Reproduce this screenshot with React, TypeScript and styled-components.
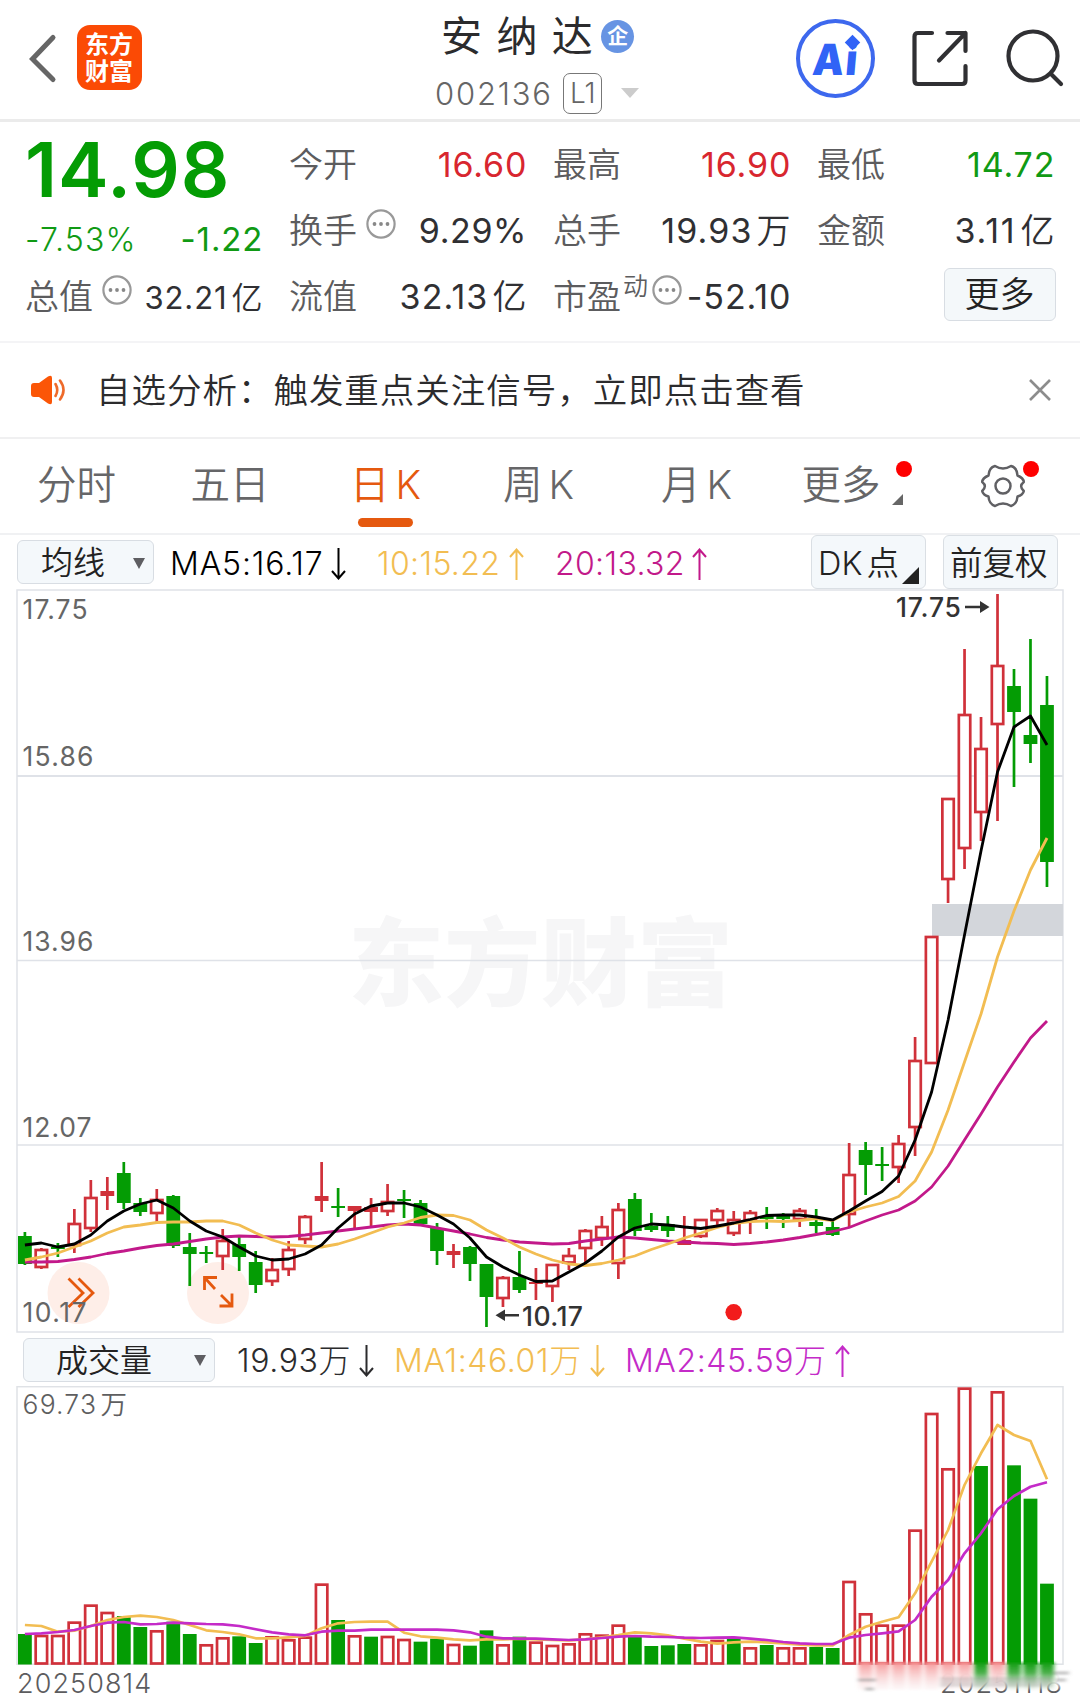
import React from 'react';
import styled, { createGlobalStyle } from 'styled-components';

const RED = '#d0313a';
const GREEN = '#049c04';
const UP_TEXT = '#d8262f';
const DOWN_TEXT = '#109a14';
const AMBER = '#f2bd52';
const MAGENTA = '#c2198a';
const VIOLET = '#c42bc8';
const ORANGE = '#e5590f';

const Global = createGlobalStyle`
  * { box-sizing: border-box; }
  body {
    margin: 0;
    background: #fff;
    font-family: Inter, "Noto Sans CJK SC", sans-serif;
    color: #2b2b2d;
    -webkit-font-smoothing: antialiased;
  }
`;

const Screen = styled.main`
  width: 1080px;
  height: 1702px;
  overflow: hidden;
  display: flex;
  flex-direction: column;
  background: #fff;
  line-height: 1;
  white-space: nowrap;
`;

/* ---------- header ---------- */
const Header = styled.header`
  height: 122px;
  flex: none;
  display: grid;
  grid-template-columns: 435px 1fr 284px;
  border-bottom: 3px solid #ebebeb;
`;
const HeadLeft = styled.div`
  display: flex;
  align-items: flex-start;
  padding: 25px 0 0 26px;
  gap: 18px;
`;
const Logo = styled.div`
  width: 65px;
  height: 65px;
  border-radius: 13px;
  background: #fb4a05;
  color: #fff;
  font-size: 24px;
  font-weight: 700;
  line-height: 27px;
  padding: 6px 0 0 8px;
  white-space: normal;
`;
const HeadCenter = styled.div`
  display: flex;
  flex-direction: column;
`;
const TitleRow = styled.div`
  display: flex;
  align-items: center;
  height: 72px;
  padding-left: 6px;
`;
const Title = styled.h1`
  margin: 0;
  font-size: 41px;
  font-weight: 400;
  letter-spacing: 14.4px;
  line-height: 72px;
`;
const Enterprise = styled.span`
  width: 33px;
  height: 33px;
  border-radius: 50%;
  background: #6794e3;
  color: #fff;
  font-size: 21px;
  font-weight: 700;
  line-height: 31px;
  text-align: center;
  margin-left: -6px;
`;
const CodeRow = styled.div`
  display: flex;
  align-items: center;
  height: 42px;
  color: #666;
`;
const Code = styled.span`
  font-size: 31px;
  font-weight: 300;
  letter-spacing: 1.8px;
`;
const Level = styled.span`
  width: 39px;
  height: 41px;
  margin-left: 10.5px;
  border: 1.5px solid #777;
  border-radius: 7px;
  font-size: 28px;
  font-weight: 300;
  line-height: 38px;
  text-align: center;
`;
const HeadRight = styled.div`
  display: flex;
  align-items: flex-start;
  padding-top: 18px;
`;
const AiBadge = styled.div`
  position: relative;
  width: 79px;
  height: 79px;
  margin-top: 1px;
  border: 4px solid #3d68ee;
  border-radius: 50%;
  color: #3163f6;
  font-size: 43px;
  font-weight: 900;
  letter-spacing: 1.5px;
  line-height: 72px;
  text-align: center;
  &::after {
    content: '';
    position: absolute;
    left: 47px;
    top: 14px;
    width: 11px;
    height: 11px;
    background: #3163f6;
    transform: rotate(45deg);
  }
`;
const AiText = styled.span`
  display: inline-block;
  transform: skewX(-5deg) scaleX(0.92);
`;

/* ---------- quote ---------- */
const Quote = styled.section`
  height: 221px;
  flex: none;
  padding: 10px 24px 0 25px;
  display: grid;
  grid-template-columns: repeat(4, 237.5px);
  grid-template-rows: repeat(3, 66px);
  column-gap: 26.5px;
  border-bottom: 2px solid #f4f4f6;
`;
const Cell = styled.div<{ $drop?: number }>`
  display: flex;
  align-items: center;
  justify-content: space-between;
  padding-top: ${p => p.$drop ?? 0}px;
`;
const BigPrice = styled.strong`
  font-size: 76px;
  font-weight: 600;
  letter-spacing: 0.9px;
  color: ${GREEN};
`;
const Label = styled.span`
  display: flex;
  align-items: center;
  font-size: 34px;
  font-weight: 350;
  color: #5c5c5e;
`;
const Sup = styled.span`
  font-size: 25px;
  margin: -22px -5px 0 2px;
`;
const Value = styled.span<{ $tone?: string; $size?: number; $ls?: number; $thin?: boolean }>`
  font-size: ${p => p.$size ?? 34}px;
  font-weight: ${p => (p.$thin ? 300 : 400)};
  letter-spacing: ${p => p.$ls ?? 0.9}px;
  margin-right: -${p => p.$ls ?? 0.9}px;
  color: ${p => p.$tone ?? '#303033'};
`;
const Unit = styled.span`
  margin-left: 4px;
  font-weight: 350;
`;
const MoreButton = styled.button`
  width: 112px;
  height: 53px;
  margin: -6px -1px 0 auto;
  border: 1.5px solid #d8dde3;
  border-radius: 6px;
  background: #f4f8fa;
  font: 350 35px/1 Inter, "Noto Sans CJK SC", sans-serif;
  color: #222;
  padding: 1px 0 0;
`;

/* ---------- notice ---------- */
const Notice = styled.section`
  height: 96px;
  flex: none;
  display: flex;
  align-items: center;
  padding: 0 29px 0 30px;
  border-bottom: 2px solid #f0f0f1;
`;
const NoticeText = styled.p`
  margin: 2px auto 0 29px;
  font-size: 34.5px;
  font-weight: 350;
  letter-spacing: 0.98px;
`;

/* ---------- tabs ---------- */
const Tabs = styled.nav`
  height: 96px;
  flex: none;
  display: grid;
  grid-template-columns: 153px 154px 157px 149px 167px 122px 1fr;
  border-bottom: 2px solid #f0f1f3;
`;
const Tab = styled.div<{ $active?: boolean }>`
  position: relative;
  display: flex;
  align-items: center;
  justify-content: center;
  gap: 6px;
  font-size: 39.5px;
  font-weight: 350;
  color: ${p => (p.$active ? ORANGE : '#666668')};
  ${p =>
    p.$active &&
    `&::after {
      content: '';
      position: absolute;
      left: 51px;
      bottom: 6px;
      width: 55px;
      height: 9px;
      border-radius: 5px;
      background: ${ORANGE};
    }`}
`;
const Dot = styled.i<{ $right: number }>`
  position: absolute;
  top: 22px;
  right: ${p => p.$right}px;
  width: 16px;
  height: 16px;
  border-radius: 50%;
  background: #fe0000;
`;
const Corner = styled.i<{ $size: number; $tone: string; $right: number; $bottom: number }>`
  position: absolute;
  right: ${p => p.$right}px;
  bottom: ${p => p.$bottom}px;
  width: ${p => p.$size}px;
  height: ${p => p.$size}px;
  background: ${p => p.$tone};
  clip-path: polygon(100% 0, 100% 100%, 0 100%);
`;
const GearTab = styled(Tab)`
  justify-content: flex-start;
  padding-left: 78px;
  padding-bottom: 1px;
`;

/* ---------- indicator bars ---------- */
const Bar = styled.section<{ $h: number; $pad: number }>`
  height: ${p => p.$h}px;
  flex: none;
  display: flex;
  align-items: center;
  padding: 0 22px 0 ${p => p.$pad}px;
`;
const Select = styled.div<{ $w: number; $pl: number }>`
  width: ${p => p.$w}px;
  height: 44px;
  display: flex;
  align-items: center;
  justify-content: space-between;
  padding: 2px 8px 0 ${p => p.$pl}px;
  border: 1.5px solid #d8dde3;
  border-radius: 6px;
  background: #f4f8fb;
  font-size: 32px;
  font-weight: 350;
  color: #222;
`;
const Reading = styled.span<{ $tone: string; $w: number; $ml: number; $ls?: number }>`
  display: flex;
  align-items: center;
  justify-content: space-between;
  width: ${p => p.$w}px;
  margin-left: ${p => p.$ml}px;
  padding-top: 3px;
  font-size: 32px;
  font-weight: 320;
  letter-spacing: ${p => p.$ls ?? 0.35}px;
  color: ${p => p.$tone};
`;
const Chip = styled.div<{ $ml?: string }>`
  position: relative;
  width: 115px;
  height: 54px;
  margin-left: ${p => p.$ml ?? '17px'};
  padding: 1px 0 0 6px;
  border: 1.5px solid #dadfe4;
  border-radius: 6px;
  background: #f4f8fb;
  font-size: 32.5px;
  font-weight: 350;
  line-height: 53px;
  color: #222;
`;
const Plot = styled.div`
  flex: none;
  display: flex;
  svg { display: block; }
`;
const Footer = styled.footer`
  position: relative;
  flex: 1;
  display: flex;
  justify-content: space-between;
  padding: 5px 17px 0 17px;
  font-size: 27px;
  font-weight: 350;
  line-height: 28px;
  letter-spacing: 1.1px;
  color: #5c5c5e;
`;
const Smear = styled.svg`
  position: absolute;
  left: 850px;
  top: -6px;
`;

/* ---------- small drawings ---------- */
const Info = ({ up = 14 }: { up?: number }) => (
  <svg width="30" height="30" viewBox="0 0 30 30" style={{ marginLeft: 9, marginTop: -up }}>
    <circle cx="15" cy="15" r="13.6" fill="none" stroke="#999" strokeWidth="2.2" />
    {[8.5, 15, 21.5].map(x => <circle key={x} cx={x} cy="15" r="1.9" fill="#888" />)}
  </svg>
);
const Caret = ({ w = 12, tone = '#5e5e62' }: { w?: number; tone?: string }) => (
  <svg width={w} height="11" viewBox="0 0 12 11" preserveAspectRatio="none">
    <path d="M0 0H12L6 11Z" fill={tone} />
  </svg>
);
const Arrow = ({ up }: { up?: boolean }) => (
  <svg width="15" height="32" viewBox="0 0 15 32" fill="none" stroke="currentColor" strokeWidth="2"
    transform={up ? undefined : 'rotate(180)'}>
    <path d="M7.5 32V1.5M1 9L7.5 1.5L14 9" />
  </svg>
);

/* ---------- data ---------- */
type Candle = [up: 0 | 1, high: number, top: number, bottom: number, low: number];
const candles: Candle[] = [
  [0, 1232, 1236, 1264, 1265], [1, 1248, 1250, 1267, 1269], [0, 1243, 1247, 1249, 1257],
  [1, 1209, 1224, 1245, 1253], [1, 1180, 1198, 1228, 1232], [1, 1177, 1191, 1196, 1210],
  [0, 1162, 1173, 1203, 1209], [0, 1198, 1203, 1212, 1216], [1, 1189, 1200, 1213, 1222],
  [0, 1195, 1196, 1246, 1248], [0, 1233, 1247, 1254, 1286], [0, 1246, 1252, 1254, 1263],
  [1, 1229, 1241, 1256, 1270], [0, 1237, 1244, 1257, 1271], [0, 1251, 1262, 1285, 1293],
  [1, 1258, 1270, 1281, 1286], [1, 1241, 1250, 1269, 1276], [1, 1215, 1217, 1239, 1244],
  [1, 1162, 1196, 1201, 1212], [0, 1188, 1206, 1208, 1217], [1, 1206, 1206, 1211, 1230],
  [1, 1198, 1207, 1212, 1227], [1, 1184, 1202, 1211, 1216], [0, 1190, 1199, 1201, 1218],
  [0, 1200, 1203, 1224, 1224], [0, 1223, 1228, 1251, 1265], [1, 1244, 1251, 1255, 1268],
  [0, 1246, 1247, 1264, 1281], [0, 1264, 1264, 1297, 1327], [1, 1276, 1278, 1298, 1307],
  [0, 1251, 1277, 1290, 1293], [1, 1268, 1282, 1284, 1300], [1, 1264, 1265, 1286, 1302],
  [1, 1248, 1256, 1262.5, 1270], [1, 1229, 1231, 1248, 1263], [1, 1216, 1227, 1238, 1246],
  [1, 1203, 1210, 1263, 1279], [0, 1193, 1199, 1231, 1236], [0, 1213, 1226, 1230, 1232],
  [0, 1216, 1224, 1231, 1237], [1, 1216, 1240, 1245, 1245], [1, 1219, 1220, 1236, 1238],
  [1, 1208, 1211, 1220, 1225], [1, 1211, 1220, 1233, 1236], [1, 1210, 1213, 1220, 1234],
  [0, 1207, 1216, 1219, 1229], [0, 1213, 1216, 1219, 1228], [1, 1208, 1211, 1219, 1227],
  [0, 1209, 1222, 1226, 1233], [0, 1220, 1227, 1235, 1236], [1, 1143, 1175, 1214, 1228],
  [0, 1142, 1150, 1165, 1195], [0, 1147, 1164, 1166, 1181], [1, 1135, 1144, 1167, 1183],
  [1, 1037, 1061, 1127, 1156], [1, 936, 937, 1063, 1064], [1, 799, 799, 879, 903],
  [1, 649, 715, 848, 869], [1, 717, 749, 812, 841], [1, 594, 666, 724, 821],
  [0, 669, 686, 712, 787], [0, 639, 735, 744, 763], [0, 676, 705, 862, 887],
];
const ma5 = [1245, 1243, 1247, 1244, 1235, 1221, 1211, 1204, 1200, 1208, 1221, 1231, 1237, 1247, 1256,
  1260, 1259, 1254, 1245, 1228, 1214, 1206, 1203, 1203, 1207, 1215, 1224, 1238, 1257, 1267, 1275, 1281.5,
  1281, 1272, 1263, 1251, 1237, 1228, 1224, 1225, 1227, 1228.5, 1226, 1223, 1219.5, 1215.5, 1215, 1215,
  1217, 1220, 1211, 1201, 1191.5, 1176, 1140, 1092, 1020, 935, 851, 772, 727, 716, 745];
const ma10 = [1260, 1257, 1253, 1247, 1241, 1233, 1227, 1225, 1222.5, 1222, 1222, 1221, 1221, 1225, 1233,
  1240, 1245, 1246, 1247, 1244, 1239, 1233, 1227, 1223, 1217.5, 1215, 1215.5, 1220, 1230, 1238, 1247, 1254,
  1260, 1264, 1265.5, 1263.5, 1260, 1256, 1249.5, 1244, 1238, 1233, 1227.5, 1223.5, 1221.5, 1221, 1221.5,
  1220.5, 1218.5, 1220.5, 1212, 1207, 1203, 1196.5, 1181, 1152, 1110, 1062, 1014, 957, 911, 870, 838];
const ma20 = [1262, 1262, 1261.5, 1259.5, 1257, 1253.5, 1251, 1248, 1245.5, 1244, 1241.5, 1239, 1237, 1236,
  1236.5, 1237, 1236.5, 1235, 1233, 1231, 1229, 1227, 1225, 1224, 1225, 1228, 1231, 1234, 1237.5, 1240, 1242,
  1243, 1244, 1243.5, 1241, 1239, 1237, 1238, 1239.5, 1241, 1242, 1243, 1243.5, 1244.5, 1243.5, 1242, 1240,
  1237.5, 1234.5, 1231.5, 1227.5, 1221, 1215, 1210, 1201, 1187, 1166, 1140, 1114, 1087, 1062, 1038, 1021];

/* bar tops, in thirds of a pixel */
const volumes = [792, 795, 795, 755, 704, 726, 738, 771, 781, 755, 792, 823, 802, 799, 819, 799, 808, 800,
  641, 750, 796, 800, 798, 807, 815, 806, 822, 827, 781, 823, 800, 815, 825, 820, 790, 794, 764, 797, 828,
  826, 822, 823, 810, 806, 832, 825, 832, 832, 831, 834, 633, 730, 764, 764, 479, 129, 295, 53, 288, 64, 286,
  386, 641];
const falling = new Set([0, 6, 7, 9, 10, 13, 14, 19, 21, 24, 25, 27, 28, 30, 37, 38, 39, 40, 43, 45, 48, 49,
  58, 60, 61, 62]);
const volMa1 = [765, 768, 785, 782, 768, 750, 741, 737, 741, 750, 765, 781, 786, 793, 805, 805, 802, 798, 775,
  760, 756, 755, 755, 788, 799, 803, 808, 811, 808, 808, 806, 808, 810, 811, 808, 802, 795, 787, 790, 796,
  806, 815, 821, 817, 815, 817, 820, 824, 826, 826, 795, 770, 755, 742, 670, 575, 480, 345, 250, 165, 195,
  213, 328];
const volMa2 = [792, 790, 786, 780, 768, 758, 756, 763, 762, 758, 760, 762, 763, 768, 778, 787, 793, 796, 785,
  782, 782, 779, 779, 779, 779, 779, 781, 787, 800, 805, 806, 806, 808, 810, 808, 804, 800, 798, 800, 801,
  803, 804, 803, 802, 806, 810, 816, 820, 822, 822, 803, 795, 790, 784, 750, 680, 630, 550, 490, 418, 378,
  350, 337];

const cx = (i: number) => 24.9 + i * 16.485;
const vy = (v: number) => 1370 + v / 3;
const points = (ys: number[], f: (v: number) => number = v => v) =>
  ys.map((y, i) => `${cx(i).toFixed(1)},${f(y).toFixed(1)}`).join(' ');

const CandleMark = ({ i, c }: { i: number; c: Candle }) => {
  const [up, high, top, bottom, low] = c;
  const x = cx(i);
  const color = up ? RED : GREEN;
  const hollow = up === 1 && bottom - top > 6;
  return (
    <g stroke={color} strokeWidth="2.7">
      <path d={`M${x} ${high}V${top}M${x} ${bottom}V${low}`} />
      {hollow ? (
        <rect x={x - 5.7} y={top} width="11.4" height={bottom - top} fill="#fff" />
      ) : (
        <rect x={x - 6.9} y={top} width="13.8" height={bottom - top} fill={color} stroke="none" />
      )}
    </g>
  );
};

const PriceChart = () => (
  <svg width="1080" height="744" viewBox="0 589 1080 744" fontFamily='Inter, "Noto Sans CJK SC", sans-serif'>
    <text x="348" y="998" fontSize="96" fontWeight="800" fill="#f6f6f7" textLength="385">东方财富</text>
    <g stroke="#dfe2e8" strokeWidth="1.5" fill="none">
      <rect x="17" y="590" width="1046" height="742" />
      <path d="M17 776H1063" strokeWidth="2.2" />
      <path d="M17 960.5H1063M17 1145H1063" />
    </g>
    <rect x="932" y="904" width="131" height="32" fill="#d3d6db" />
    <circle cx="78.5" cy="1293" r="31" fill="#feeee8" />
    <circle cx="218" cy="1293" r="31" fill="#feeee8" />
    {candles.map((c, i) => <CandleMark key={i} i={i} c={c} />)}
    <g fill="none" strokeWidth="2.8" strokeLinejoin="round">
      <polyline points={points(ma20)} stroke={MAGENTA} />
      <polyline points={points(ma10)} stroke={AMBER} />
      <polyline points={points(ma5)} stroke="#000" />
    </g>
    <g fill="none" stroke={ORANGE} strokeWidth="2.8">
      <path d="M68.500 1278.500L83 1293L68.500 1307M78.500 1278.500L93 1293L78.500 1307" />
      <path d="M204.500 1290V1277.500H217M204.500 1277.500L215 1289M232 1293.500V1306H219.500M232 1306L221 1295" />
    </g>
    <g fill="#666" fontSize="26.500" fontWeight="370">
      <text x="22.500" y="619" textLength="65">17.75</text>
      <text x="22.500" y="766" textLength="71">15.86</text>
      <text x="22.500" y="951" textLength="71">13.96</text>
      <text x="22.500" y="1137" textLength="69">12.07</text>
      <text x="22.500" y="1322" textLength="64">10.17</text>
    </g>
    <g fill="#333" fontSize="26.500" fontWeight="500">
      <text x="896" y="616.500" textLength="65">17.75</text>
      <text x="522" y="1325.500" textLength="61">10.17</text>
      <path d="M965 605.800H980V601L989.500 607L980 613V608.200H965Z" />
      <path d="M519 1314H505V1309.500L495.500 1315.200L505 1321V1316.400H519Z" />
    </g>
    <circle cx="733.700" cy="1312.300" r="8.300" fill="#f21c1c" />
  </svg>
);

const VolumeChart = () => (
  <svg width="1080" height="279" viewBox="0 1386 1080 279" fontFamily='Inter, "Noto Sans CJK SC", sans-serif'>
    <rect x="17" y="1386.700" width="1046" height="277.500" fill="none" stroke="#dfe2e6" strokeWidth="1.500" />
    <g fontSize="26.500" fontWeight="350" fill="#5e5e60">
      <text x="22.500" y="1414" textLength="73.500">69.73</text>
      <text x="100.500" y="1414">万</text>
    </g>
    {volumes.map((v, i) =>
      falling.has(i) ? (
        <rect key={i} x={cx(i) - 6.900} y={vy(v)} width="13.800" height={1664.500 - vy(v)} fill={GREEN} />
      ) : (
        <rect key={i} x={cx(i) - 5.700} y={vy(v) + 1} width="11.400" height={1662.500 - vy(v)} fill="#fff"
          stroke={RED} strokeWidth="2.700" />
      ),
    )}
    <g fill="none" strokeWidth="2.700" strokeLinejoin="round">
      <polyline points={points(volMa1, vy)} stroke={AMBER} />
      <polyline points={points(volMa2, vy)} stroke={VIOLET} />
    </g>
  </svg>
);

const SmearOverlay = () => (
  <Smear width="230" height="44" viewBox="850 1659 230 44">
    <defs>
      <linearGradient id="fade" x1="0" y1="0" x2="0" y2="1">
        <stop offset="0" stopColor="#fff" />
        <stop offset=".65" stopColor="#fff" stopOpacity=".92" />
        <stop offset="1" stopColor="#fff" stopOpacity="0" />
      </linearGradient>
      <linearGradient id="red" x1="0" y1="0" x2="0" y2="1">
        <stop offset="0" stopColor="#f79596" />
        <stop offset="1" stopColor="#f3d4d5" stopOpacity=".15" />
      </linearGradient>
      <linearGradient id="green" x1="0" y1="0" x2="0" y2="1">
        <stop offset="0" stopColor="#0c9d0c" />
        <stop offset=".4" stopColor="#4fb14f" />
        <stop offset="1" stopColor="#b5cdb5" stopOpacity=".15" />
      </linearGradient>
      <filter id="soft" x="-5%" y="-20%" width="110%" height="140%">
        <feGaussianBlur stdDeviation="2 1.200" />
      </filter>
    </defs>
    <rect x="852" y="1665" width="222" height="26" fill="url(#fade)" />
    <g filter="url(#soft)">
      {volumes.map((_, i) =>
        i < 51 ? null : (
          <rect key={i} x={cx(i) - 7} y="1662" width="14" height="28" fill={falling.has(i) ? 'url(#green)' : 'url(#red)'} />
        ),
      )}
      <path d="M858 1680H876M865 1689H874M1054 1673H1069M1056 1680H1066" stroke="#999" strokeWidth="3" opacity=".6" />
      <path d="M940 1682H1052" stroke="#888" strokeWidth="10" opacity=".25" />
    </g>
  </Smear>
);

export default function App() {
  return (
    <Screen>
      <Global />
      <Header>
        <HeadLeft>
          <svg width="33" height="68" viewBox="0 0 33 68" fill="none" stroke="#666" strokeWidth="5" strokeLinecap="round">
            <path d="M27 12.500L6.500 34L27 54.500" strokeLinejoin="miter" />
          </svg>
          <Logo>东方<br />财富</Logo>
        </HeadLeft>
        <HeadCenter>
          <TitleRow>
            <Title>安纳达</Title>
            <Enterprise>企</Enterprise>
          </TitleRow>
          <CodeRow>
            <Code>002136</Code>
            <Level>L1</Level>
            <svg width="38" height="10" viewBox="0 0 38 10"><path d="M19 0H37L28 10Z" fill="#ccc" /></svg>
          </CodeRow>
        </HeadCenter>
        <HeadRight>
          <AiBadge><AiText>Ai</AiText></AiBadge>
          <svg width="205" height="84" viewBox="875 18 205 84" fill="none" stroke="#303033" strokeWidth="4.200" strokeLinecap="round" strokeLinejoin="round">
            <path d="M932 33H918Q914.500 33 914.500 36.500V80.500Q914.500 84 918 84H962Q965.500 84 965.500 80.500V66M947.500 33H965.500V51M965.500 33L939 60.500" />
            <circle cx="1033" cy="56" r="24.500" />
            <path d="M1051 74L1061 84" />
          </svg>
        </HeadRight>
      </Header>

      <Quote>
        <Cell $drop={7}><BigPrice>14.98</BigPrice></Cell>
        <Cell><Label>今开</Label><Value $tone={UP_TEXT}>16.60</Value></Cell>
        <Cell><Label>最高</Label><Value $tone={UP_TEXT}>16.90</Value></Cell>
        <Cell><Label>最低</Label><Value $tone={DOWN_TEXT}>14.72</Value></Cell>
        <Cell $drop={17}>
          <Value $tone={DOWN_TEXT} $size={32} $ls={1.2} $thin>-7.53%</Value>
          <Value $tone={DOWN_TEXT} $size={33}>-1.22</Value>
        </Cell>
        <Cell><Label>换手<Info /></Label><Value $ls={0.6}>9.29%</Value></Cell>
        <Cell><Label>总手</Label><Value $ls={1.1}>19.93<Unit>万</Unit></Value></Cell>
        <Cell><Label>金额</Label><Value $ls={1.8}>3.11<Unit>亿</Unit></Value></Cell>
        <Cell><Label>总值<Info /></Label><Value $size={31}>32.21<Unit>亿</Unit></Value></Cell>
        <Cell><Label>流值</Label><Value $ls={1.1}>32.13<Unit>亿</Unit></Value></Cell>
        <Cell><Label>市盈<Sup>动</Sup><Info /></Label><Value>-52.10</Value></Cell>
        <Cell><MoreButton>更多</MoreButton></Cell>
      </Quote>

      <Notice>
        <svg width="37" height="32" viewBox="0 0 37 32">
          <path d="M4 9H9L18 2.500Q22 .500 22 4V28Q22 31.500 18 29.500L9 23H4Q1 23 1 20V12Q1 9 4 9Z" fill="#fb5607" />
          <path d="M25.500 10Q29 16 25.500 22M30 6.500Q37 16 30 25.500" fill="none" stroke="#ee6a2a" strokeWidth="2.600" strokeLinecap="round" />
        </svg>
        <NoticeText>自选分析：触发重点关注信号，立即点击查看</NoticeText>
        <svg width="22" height="22" viewBox="0 0 22 22" stroke="#8c8c8c" strokeWidth="2.600"><path d="M1 1L21 21M21 1L1 21" /></svg>
      </Notice>

      <Tabs>
        <Tab>分时</Tab>
        <Tab>五日</Tab>
        <Tab $active>日<span>K</span></Tab>
        <Tab>周<span>K</span></Tab>
        <Tab>月<span>K</span></Tab>
        <Tab>更多<Dot $right={-10} /><Corner $size={11} $tone="#666" $right={-1} $bottom={28} /></Tab>
        <GearTab>
          <svg width="46" height="46" viewBox="-23 -23 46 46" fill="none" stroke="#606064" strokeWidth="2.500" strokeLinejoin="round">
            <path d="M-8 -20Q0 -15 8 -20Q14 -18.500 14.500 -10.500Q20.500 -8 20.800 -4Q15.500 0 20.800 5Q20 9 14.500 10.500Q14 18 8 20Q0 15 -8 20Q-14 18 -14.500 10.500Q-20 9 -20.800 5Q-15.500 0 -20.800 -4Q-20.500 -8 -14.500 -10.500Q-14 -18.500 -8 -20Z" />
            <circle r="7.500" />
          </svg>
          <Dot $right={41} />
        </GearTab>
      </Tabs>

      <Bar $h={54} $pad={17}>
        <Select $w={137} $pl={23}>均线<Caret /></Select>
        <Reading $tone="#000" $w={176} $ml={16} $ls={0.85}>MA5:16.17<Arrow /></Reading>
        <Reading $tone={AMBER} $w={147} $ml={31}>10:15.22<Arrow up /></Reading>
        <Reading $tone={MAGENTA} $w={152} $ml={31}>20:13.32<Arrow up /></Reading>
        <Chip $ml="auto">DK<Unit>点</Unit><Corner $size={17} $tone="#222" $right={6} $bottom={4} /></Chip>
        <Chip>前复权</Chip>
      </Bar>
      <Plot><PriceChart /></Plot>

      <Bar $h={53} $pad={23}>
        <Select $w={192} $pl={32}>成交量<Caret /></Select>
        <Reading $tone="#2b2b2d" $w={137} $ml={22} $ls={0.6}>19.93万<Arrow /></Reading>
        <Reading $tone={AMBER} $w={211} $ml={20} $ls={0.6}>MA1:46.01万<Arrow /></Reading>
        <Reading $tone={VIOLET} $w={225} $ml={20} $ls={0.55}>MA2:45.59万<Arrow up /></Reading>
      </Bar>
      <Plot><VolumeChart /></Plot>
      <Footer>
        <span>20250814</span>
        <span>20251118</span>
        <SmearOverlay />
      </Footer>
    </Screen>
  );
}
